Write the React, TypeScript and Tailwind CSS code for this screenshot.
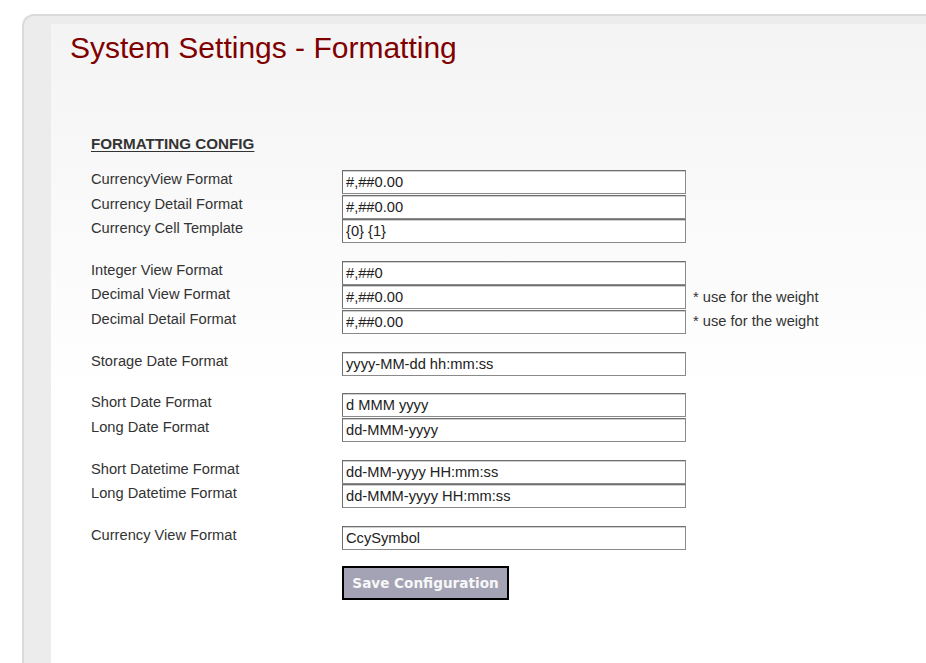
import React from "react";

type Row = { label: string; value: string; note?: string };

const groups: Row[][] = [
  [
    { label: "CurrencyView Format", value: "#,##0.00" },
    { label: "Currency Detail Format", value: "#,##0.00" },
    { label: "Currency Cell Template", value: "{0} {1}" },
  ],
  [
    { label: "Integer View Format", value: "#,##0" },
    { label: "Decimal View Format", value: "#,##0.00", note: "* use for the weight" },
    { label: "Decimal Detail Format", value: "#,##0.00", note: "* use for the weight" },
  ],
  [{ label: "Storage Date Format", value: "yyyy-MM-dd hh:mm:ss" }],
  [
    { label: "Short Date Format", value: "d MMM yyyy" },
    { label: "Long Date Format", value: "dd-MMM-yyyy" },
  ],
  [
    { label: "Short Datetime Format", value: "dd-MM-yyyy HH:mm:ss" },
    { label: "Long Datetime Format", value: "dd-MMM-yyyy HH:mm:ss" },
  ],
  [{ label: "Currency View Format", value: "CcySymbol" }],
];

export default function App() {
  return (
    <div className="min-h-[663px] bg-white pl-[22px] pt-[14px] font-['Liberation_Sans',Arial,sans-serif]">
      <div className="h-[649px] rounded-tl-[12px] border-l-2 border-t-2 border-[#dadada] bg-[#ececec] pl-[27px] pt-[8px]">
        <div className="h-full bg-[linear-gradient(to_bottom,#f4f4f4,#ffffff_58%)] pl-[19px] pt-[6px]">
          <h1 className="text-[30px] leading-[36px] text-[#800000]">System Settings - Formatting</h1>
          <div className="pl-[21px] pt-[69px]">
            <div className="text-[15.2px] font-bold leading-[17px] text-[#333] underline underline-offset-[2px]">
              FORMATTING CONFIG
            </div>
            <div className="mt-[18px] flex flex-col gap-[17.75px]">
              {groups.map((g, gi) => (
                <div key={gi} className="flex flex-col gap-[0.5px]">
                  {g.map((r, ri) => (
                    <div key={ri} className="flex h-[24px] items-start">
                      <div className="w-[251px] pt-[1px] text-[14.667px] leading-[17px] text-[#333]">{r.label}</div>
                      <input
                        readOnly
                        value={r.value}
                        className="box-border h-[24px] w-[344px] border border-[#8a8a8a] border-l-[#6f6f6f] border-t-[#6f6f6f] bg-white px-[3px] text-[14.667px] text-[#222] shadow-[inset_0_1px_0_#cfcfcf] outline-none font-['Liberation_Sans',Arial,sans-serif]"
                      />
                      {r.note && (
                        <div className="ml-[7px] self-center text-[14.667px] leading-[17px] text-[#333]">{r.note}</div>
                      )}
                    </div>
                  ))}
                </div>
              ))}
            </div>
            <div className="mt-[16.25px] pl-[251px]">
              <button className="box-border h-[34px] w-[167px] border-2 border-black bg-[#a3a3b5] text-center text-[13.6px] font-bold text-[#f7f7f7] font-['DejaVu_Sans',Verdana,sans-serif]">
                Save Configuration
              </button>
            </div>
          </div>
        </div>
      </div>
    </div>
  );
}
